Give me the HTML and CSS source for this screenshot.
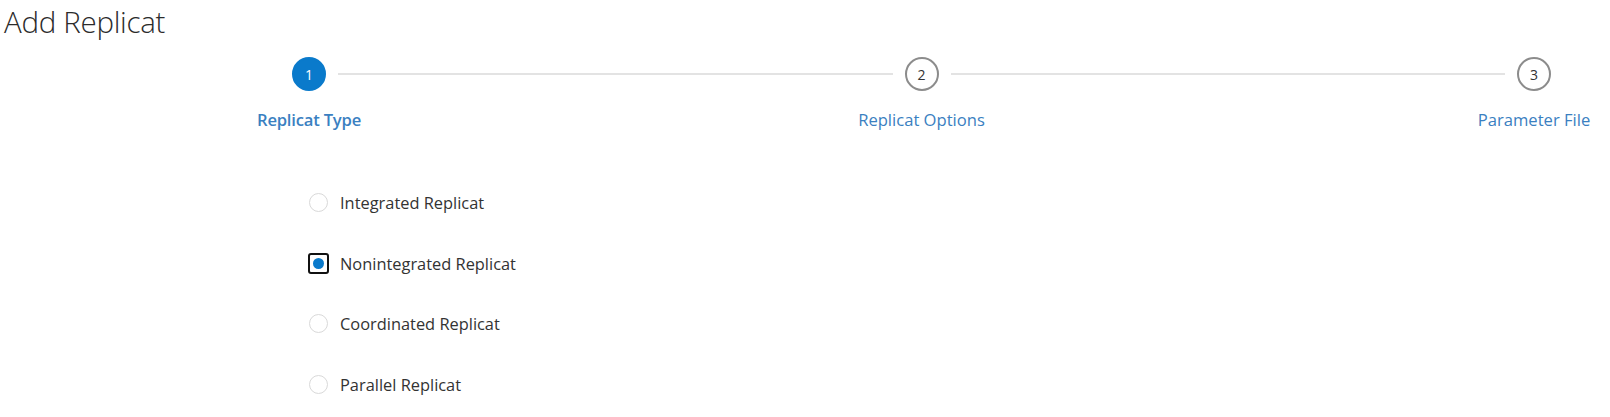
FILE: index.html
```html
<!DOCTYPE html>
<html>
<head>
<meta charset="utf-8">
<link rel="stylesheet" href="styles.css">
</head>
<body>
<h1 class="title">Add Replicat</h1>
<div class="train">
  <div class="dot dot-active">1</div>
  <div class="line"></div>
  <div class="dot">2</div>
  <div class="line"></div>
  <div class="dot">3</div>
  <div class="label label-active">Replicat Type</div>
  <div class="label label-2">Replicat Options</div>
  <div class="label label-3">Parameter File</div>
</div>
<div class="radios">
  <div class="radio-row"><span class="radio"></span><span class="radio-text">Integrated Replicat</span></div>
  <div class="radio-row"><span class="radio radio-on"><span class="radio-dot"></span></span><span class="radio-text">Nonintegrated Replicat</span></div>
  <div class="radio-row"><span class="radio"></span><span class="radio-text">Coordinated Replicat</span></div>
  <div class="radio-row"><span class="radio"></span><span class="radio-text">Parallel Replicat</span></div>
</div>
</body>
</html>
```
FILE: styles.css
```css
html, body {
  margin: 0;
  padding: 0;
  background: #fff;
}
body {
  font-family: "Open Sans", "Noto Sans", sans-serif;
  color: #333;
  width: 1610px;
  height: 417px;
  overflow: hidden;
}
.title {
  margin: 0;
  padding: 2px 0 0 4px;
  font-size: 29.5px;
  font-weight: 300;
  line-height: 40px;
  color: #2b2b2b;
  letter-spacing: -0.3px;
}
.train {
  display: grid;
  grid-template-columns: 34px 1fr 34px 1fr 34px;
  column-gap: 12px;
  align-items: center;
  margin: 15px 0 0 292px;
  width: 1259px;
}
.dot {
  width: 34px;
  height: 34px;
  box-sizing: border-box;
  border: 2px solid #8c8c8c;
  border-radius: 50%;
  display: flex;
  align-items: center;
  justify-content: center;
  font-size: 14px;
  color: #333;
  background: #fff;
}
.dot-active {
  background: #0a7acb;
  border-color: #0a7acb;
  color: #fff;
}
.line {
  height: 2px;
  background: #e3e3e3;
}
.label {
  grid-row: 2;
  justify-self: center;
  white-space: nowrap;
  font-size: 16.6px;
  color: #3a80c1;
  margin-top: 18px;
  line-height: 22px;
}
.label-active {
  grid-column: 1;
  font-weight: 600;
  letter-spacing: -0.2px;
}
.label-2 { grid-column: 3; }
.label-3 { grid-column: 5; }
.radios {
  display: flex;
  flex-direction: column;
  gap: 39.5px;
  margin: 61px 0 0 308px;
}
.radio-row {
  display: flex;
  align-items: center;
  gap: 11px;
  height: 21px;
}
.radio {
  width: 21px;
  height: 21px;
  display: flex;
  align-items: center;
  justify-content: center;
  position: relative;
}
.radio::before {
  content: "";
  width: 19px;
  height: 19px;
  box-sizing: border-box;
  border: 1px solid #d9d9d9;
  border-radius: 50%;
  position: absolute;
  left: 1px;
  top: 1px;
}
.radio-on {
  box-sizing: border-box;
  border: 2px solid #111;
  border-radius: 3px;
}
.radio-on::before {
  display: none;
}
.radio-dot {
  width: 11px;
  height: 11px;
  border-radius: 50%;
  background: #0a7acb;
}
.radio-text {
  font-size: 16.4px;
  line-height: 21px;
  color: #333;
}
```
